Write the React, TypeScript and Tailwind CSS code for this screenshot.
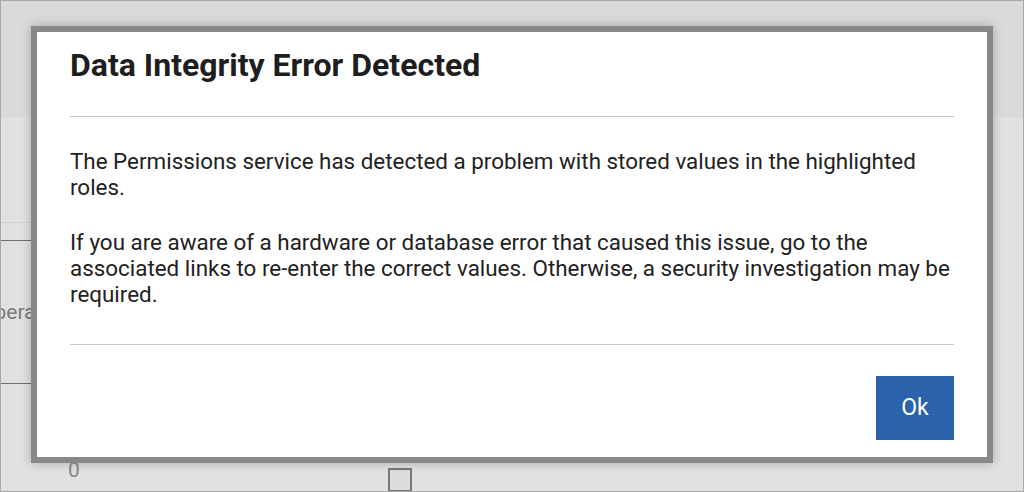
import React from "react";

export default function App() {
  return (
    <div
      className="relative w-[1024px] h-[492px] overflow-hidden border border-[#a9a9a9] bg-[#e1e1e1]"
      style={{ fontFamily: "Roboto, 'Noto Sans', sans-serif" }}
    >
      {/* background page */}
      <div className="h-[116px] bg-[#dadada]" />
      <div className="mt-[105px] h-px w-[60px] bg-[#d0d0d0]" />
      <div className="mt-[17px] h-px w-[60px] bg-[#6e6e6e]" />
      <div className="mt-[59px] flex h-[26px] items-center">
        <span className="-ml-[21px] text-[21px] text-[#7a7a7a]">Operations</span>
      </div>
      <div className="mt-[57px] h-px w-[60px] bg-[#6e6e6e]" />
      <div className="mt-[74px] flex items-start">
        <span className="ml-[67px] text-[21px] leading-[24px] text-[#888]">0</span>
        <span className="ml-[308px] mt-[10px] h-[24px] w-[24px] border-2 border-[#777] bg-[#dcdcdc]" />
      </div>

      {/* dialog */}
      <div className="absolute left-[30px] top-[25px] w-[962px] h-[437px] border-[6px] border-[#888] bg-white shadow-[0_0_10px_rgba(0,0,0,0.25)] px-[33px] flex flex-col">
        <h1 className="mt-[17px] text-[32px] leading-[32px] font-bold text-[#1e1e1e]">
          Data Integrity Error Detected
        </h1>
        <div className="mt-[35px] h-px bg-[#c8c8c8]" />
        <div className="mt-[31px] text-[22.4px] leading-[26px] text-[#222]">
          <p>
            The Permissions service has detected a problem with stored values in the highlighted roles.
          </p>
          <p className="mt-[29px]">
            If you are aware of a hardware or database error that caused this issue, go to the associated links
            to re-enter the correct values. Otherwise, a security investigation may be required.
          </p>
        </div>
        <div className="mt-[37px] h-px bg-[#c8c8c8]" />
        <div className="mt-[31px] flex justify-end">
          <button className="h-[64px] w-[78px] bg-[#2a63ab] text-[23px] text-white">Ok</button>
        </div>
      </div>
    </div>
  );
}
